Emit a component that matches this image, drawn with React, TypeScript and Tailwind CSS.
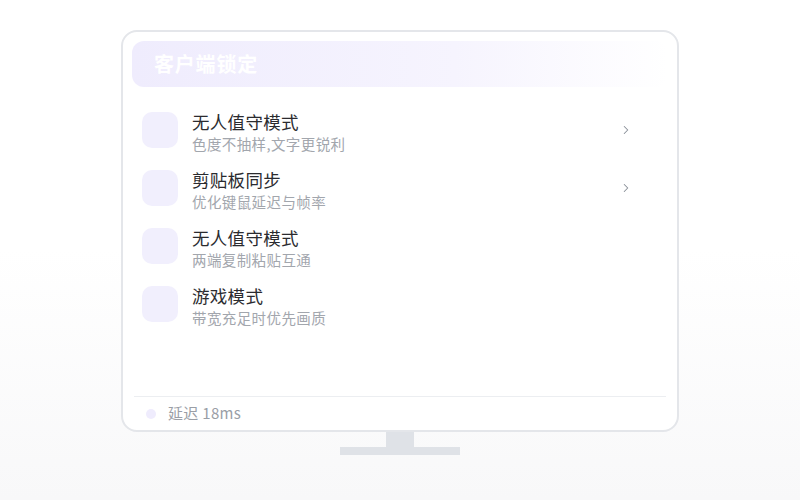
import { ChevronRight } from "lucide-react";

const rows = [
  { title: "无人值守模式", desc: "色度不抽样,文字更锐利", arrow: true },
  { title: "剪贴板同步", desc: "优化键鼠延迟与帧率", arrow: true },
  { title: "无人值守模式", desc: "两端复制粘贴互通", arrow: false },
  { title: "游戏模式", desc: "带宽充足时优先画质", arrow: false },
];

const App = () => {
  return (
    <div
      className="w-[800px] h-[500px] flex flex-col items-center pt-[30px] bg-linear-to-b from-white from-50% to-[#f8f8f9]"
      style={{ fontFamily: '"Noto Sans CJK SC", "Noto Sans", sans-serif' }}
    >
      <div className="w-[558px] h-[402px] border-2 border-[#e4e6ea] rounded-[16px] bg-white flex flex-col px-[9px] pt-[9px]">
        <div className="h-[46px] rounded-[12px] bg-linear-to-r from-[#efecfd] via-[#f6f4fe] via-60% to-white flex items-center pl-[22px]">
          <span className="text-white text-[20px] font-bold tracking-[0.8px]">客户端锁定</span>
        </div>
        <ul className="flex-1 mt-[14px] pl-[10px]">
          {rows.map(({ title, desc, arrow }, i) => (
            <li key={i} className="h-[58px] flex items-center">
              <div className="w-9 h-9 rounded-[10px] bg-[#f1effd]" />
              <div className="ml-[14px] pt-[4px] flex flex-col flex-1">
                <span className="text-[17.5px] leading-[24px] text-[#2b2b2f] tracking-[0.3px]">{title}</span>
                <span className="text-[14.5px] leading-[20px] text-[#a2a6ad] tracking-[0.4px]">{desc}</span>
              </div>
              {arrow && (
                <ChevronRight className="w-[14px] h-[14px] text-[#878d96] mr-[35px]" strokeWidth={1.75} />
              )}
            </li>
          ))}
        </ul>
        <div className="h-[34px] border-t border-[#eceef1] mx-[2px] flex items-center pl-[12px]">
          <span className="w-[10px] h-[10px] rounded-full bg-[#efecfd]" />
          <span className="ml-[12px] text-[15px] text-[#9a9ea6] tracking-[0.3px]">延迟 18ms</span>
        </div>
      </div>
      <div className="w-[28px] h-[15px] bg-[#dfe2e7]" />
      <div className="w-[120px] h-[8px] bg-[#dfe2e7]" />
    </div>
  );
};

export default App;
